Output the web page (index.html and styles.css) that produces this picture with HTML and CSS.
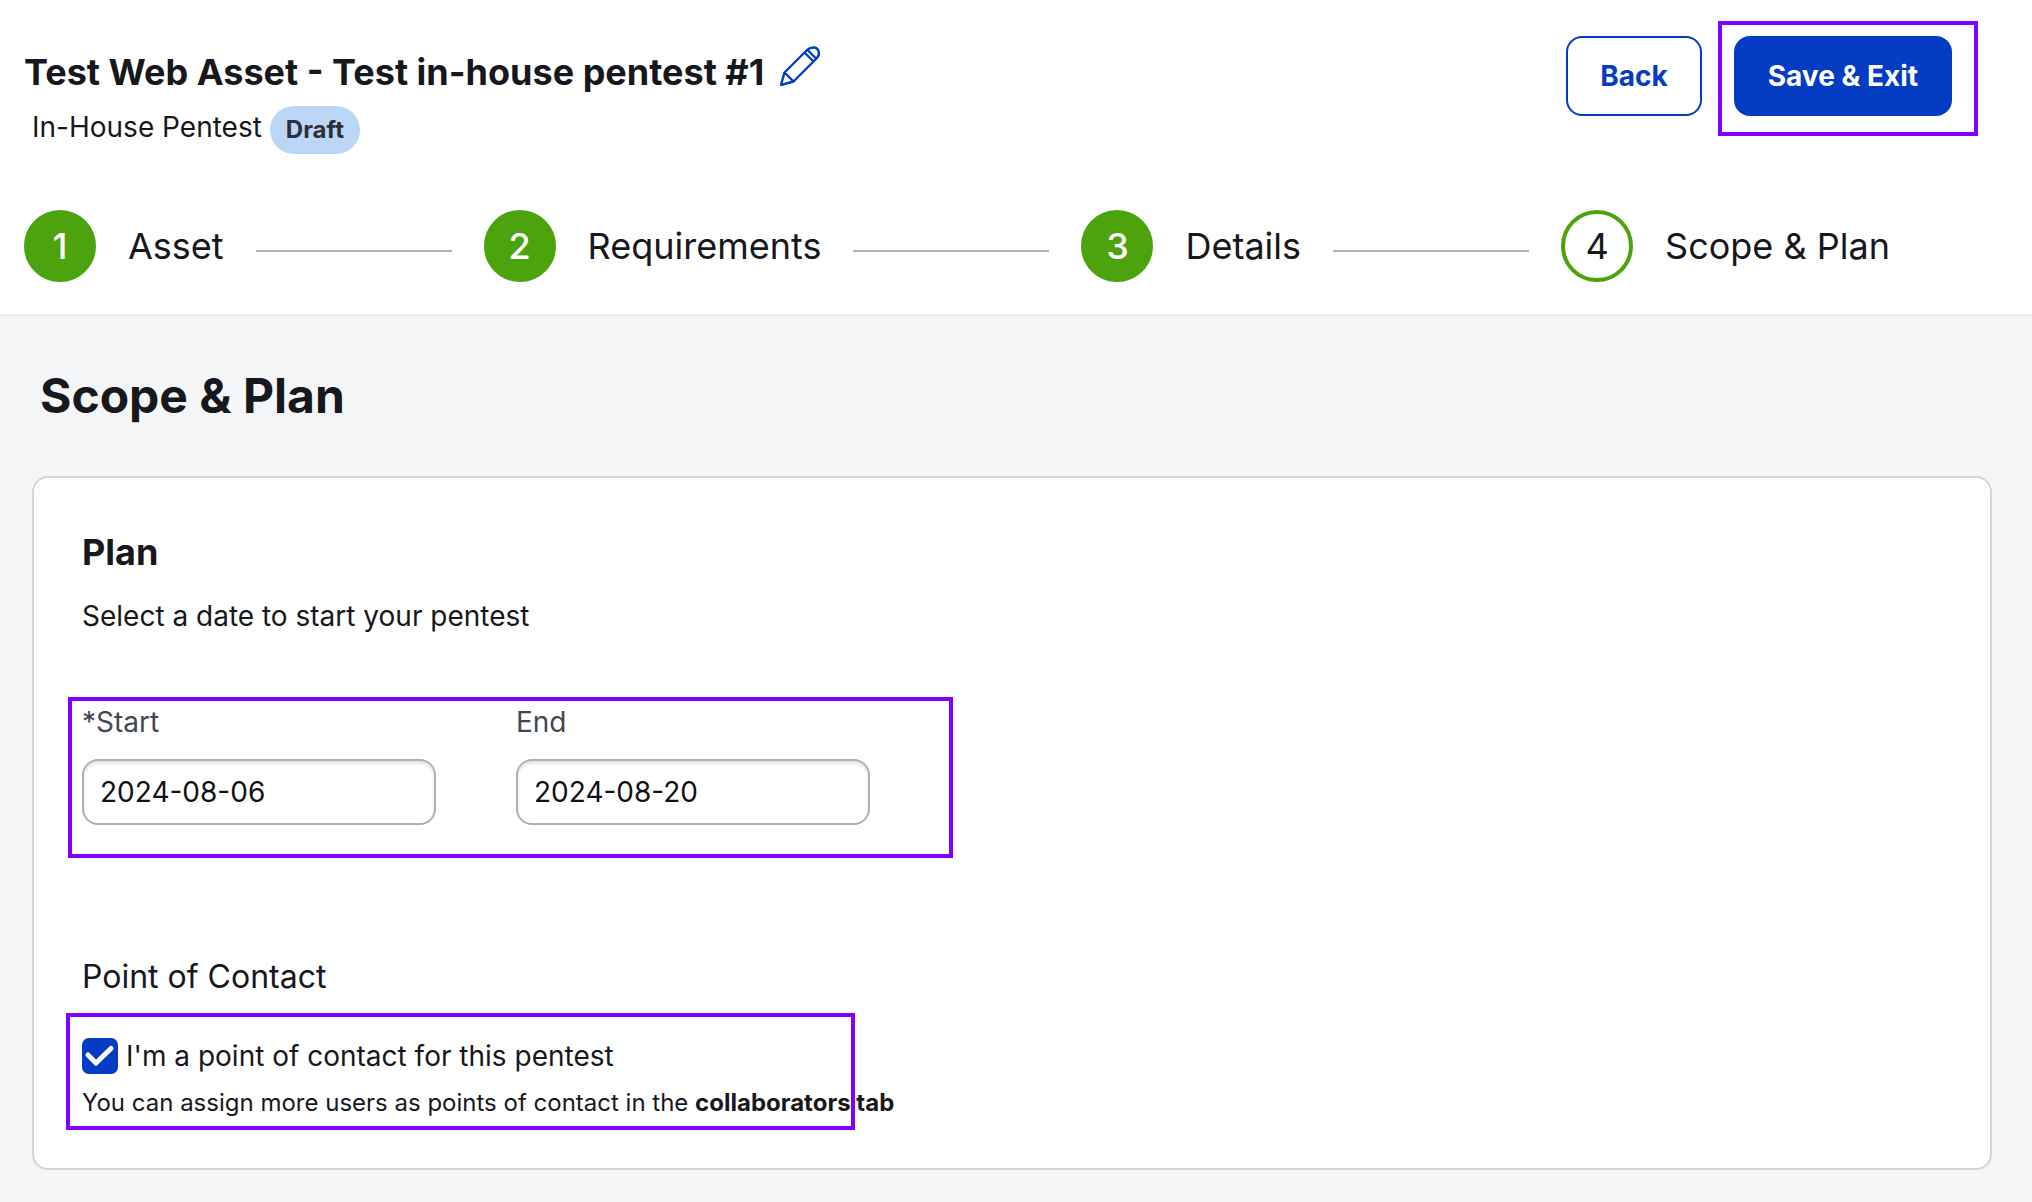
FILE: index.html
```html
<!DOCTYPE html>
<html lang="en">
<head>
  <meta charset="utf-8">
  <meta name="viewport" content="width=device-width, initial-scale=1">
  <title>Test Web Asset - Scope &amp; Plan</title>
  <link rel="stylesheet" href="styles.css">
</head>
<body>
  <header class="header">
    <div class="header-top">
      <div class="title-block">
        <div class="title-row">
          <h1 class="title">Test Web Asset - Test in-house pentest #1</h1>
          <button class="edit-button" type="button" aria-label="Edit title">
            <svg class="edit-icon" viewBox="0 0 40 40" aria-hidden="true">
              <path d="M1 39 L4.500 26.500 L27 4 Q30.500 1 34.500 1.500 Q38.500 2.500 39 7 Q39 10 36.500 12.500 L13.500 35.500 Z M4.500 26.500 L13.500 35.500 M24.500 6.500 L33.500 15.500 M28 4.500 L36 12.500"/>
            </svg>
          </button>
        </div>
        <div class="subtitle-row">
          <span class="subtitle">In-House Pentest</span>
          <span class="badge">Draft</span>
        </div>
      </div>
      <div class="actions">
        <button class="button button-outline" type="button">Back</button>
        <div class="highlight highlight-save">
          <button class="button button-primary" type="button">Save &amp; Exit</button>
        </div>
      </div>
    </div>
    <ol class="steps">
      <li class="step"><span class="step-number">1</span><span class="step-label">Asset</span></li>
      <li class="step-line" role="presentation"></li>
      <li class="step"><span class="step-number">2</span><span class="step-label">Requirements</span></li>
      <li class="step-line" role="presentation"></li>
      <li class="step"><span class="step-number">3</span><span class="step-label">Details</span></li>
      <li class="step-line" role="presentation"></li>
      <li class="step" aria-current="step"><span class="step-number step-current">4</span><span class="step-label">Scope &amp; Plan</span></li>
    </ol>
  </header>

  <main class="main">
    <h2 class="page-heading">Scope &amp; Plan</h2>
    <section class="card">
      <h3 class="card-heading">Plan</h3>
      <p class="card-text">Select a date to start your pentest</p>
      <div class="dates highlight highlight-dates">
        <div class="field">
          <label class="field-label" for="start">*Start</label>
          <input class="field-input" id="start" type="text" value="2024-08-06">
        </div>
        <div class="field">
          <label class="field-label" for="end">End</label>
          <input class="field-input" id="end" type="text" value="2024-08-20">
        </div>
      </div>
      <h4 class="contact-heading">Point of Contact</h4>
      <div class="contact highlight highlight-contact">
        <label class="check" for="contact">
          <span class="check-box">
            <input class="check-input" id="contact" type="checkbox" checked>
            <svg class="check-icon" viewBox="0 0 36 36" aria-hidden="true"><path d="M6 17 L14 25 L29 10.500"/></svg>
          </span>
          <span>I'm a point of contact for this pentest</span>
        </label>
        <p class="contact-help">You can assign more users as points of contact in the <strong>collaborators tab</strong></p>
      </div>
    </section>
  </main>
</body>
</html>
```
FILE: styles.css
```css
* {
  box-sizing: border-box;
}

body {
  margin: 0;
  min-height: 100vh;
  background: #f4f5f7;
  color: #17181c;
  font-family: Inter, "Liberation Sans", sans-serif;
  font-size: 28px;
  line-height: 36px;
}

h1, h2, h3, h4, p, ol {
  margin: 0;
  padding: 0;
}

button, input {
  font: inherit;
}

.header {
  padding: 36px 24px 32px;
  background: #fff;
  border-bottom: 2px solid #ecedef;
}

.header-top {
  display: flex;
  justify-content: space-between;
  align-items: flex-start;
  gap: 32px;
  padding-right: 56px;
}

.title-block {
  padding-top: 10px;
}

.title-row {
  display: flex;
  align-items: flex-end;
  gap: 16px;
  height: 48px;
}

.title {
  font-size: 36px;
  line-height: 44px;
  font-weight: 700;
}

.edit-button {
  display: flex;
  align-self: flex-start;
  padding: 0;
  border: 0;
  background: none;
}

.edit-icon {
  width: 40px;
  height: 40px;
  fill: none;
  stroke: #053cc4;
  stroke-width: 2.4;
  stroke-linejoin: round;
}

.subtitle-row {
  display: flex;
  align-items: flex-start;
  gap: 8px;
  padding: 12px 0 0 8px;
}

.subtitle {
  line-height: 42px;
}

.badge {
  padding: 0 16px;
  border-radius: 24px;
  background: #bcd7f6;
  color: #2b303a;
  font-size: 24px;
  line-height: 48px;
  font-weight: 700;
}

.actions {
  display: flex;
  gap: 32px;
}

.button {
  height: 80px;
  padding: 0 32px;
  border: 2px solid #053cc4;
  border-radius: 16px;
  font-weight: 700;
}

.button-outline {
  background: #fff;
  color: #053cc4;
}

.button-primary {
  background: #053cc4;
  color: #fff;
}

/* Outlined call-out frames laid over the controls they point at. */
.highlight {
  position: relative;
}

.highlight::after {
  content: "";
  position: absolute;
  border: 4px solid #7f00ff;
  pointer-events: none;
}

.highlight-save::after {
  inset: -15px -26px -20px -16px;
}

.highlight-dates::after {
  inset: -7px -83px -33px -14px;
}

.highlight-contact::after {
  inset: -25px 39px -11px -16px;
}

.steps {
  display: flex;
  align-items: center;
  gap: 32px;
  padding-top: 56px;
  font-size: 36px;
  line-height: 44px;
  list-style: none;
}

.step {
  display: flex;
  align-items: center;
  gap: 32px;
  white-space: nowrap;
}

.step-number {
  display: grid;
  place-items: center;
  width: 72px;
  height: 72px;
  border: 4px solid #4ca30d;
  border-radius: 50%;
  background: #4ca30d;
  color: #fff;
  font-weight: 500;
}

.step-current {
  background: #fff;
  color: #17181c;
  font-weight: 400;
}

.step-line {
  flex: 0 1 196px;
  height: 2px;
  margin-top: 10px;
  background: #abb1bf;
}

.main {
  padding: 52px 40px 32px 32px;
}

.page-heading {
  padding-left: 8px;
  font-size: 48px;
  line-height: 56px;
  font-weight: 700;
}

.card {
  margin-top: 52px;
  padding: 52px 48px 49px;
  border: 2px solid #d1d5da;
  border-radius: 16px;
  background: #fff;
}

.card-heading {
  font-size: 36px;
  line-height: 44px;
  font-weight: 700;
}

.card-text {
  margin-top: 24px;
}

.dates {
  display: flex;
  gap: 80px;
  width: fit-content;
  margin-top: 70px;
}

.field {
  display: flex;
  flex-direction: column;
  gap: 19px;
}

.field-label {
  color: #414853;
}

.field-input {
  width: 354px;
  height: 66px;
  padding: 0 16px;
  border: 2px solid #abb1bf;
  border-radius: 16px;
  background: #fff;
  box-shadow: inset 0 3px 3px #e6e6e8;
  color: #101114;
}

.contact-heading {
  margin-top: 132px;
  font-size: 32px;
  line-height: 40px;
  font-weight: 400;
}

.contact {
  width: fit-content;
  margin-top: 41px;
}

.check {
  display: flex;
  align-items: center;
  gap: 8px;
}

.check-box {
  display: grid;
  width: 36px;
  height: 36px;
}

.check-input,
.check-icon {
  grid-area: 1 / 1;
  width: 36px;
  height: 36px;
  margin: 0;
}

.check-input {
  appearance: none;
  border: 2px solid #053cc4;
  border-radius: 7px;
  background: #fff;
}

.check-input:checked {
  background: #053cc4;
}

.check-icon {
  fill: none;
  stroke: #fff;
  stroke-width: 5;
  stroke-linecap: round;
  stroke-linejoin: round;
  pointer-events: none;
}

.contact-help {
  margin-top: 13px;
  font-size: 24px;
  line-height: 32px;
}
```
